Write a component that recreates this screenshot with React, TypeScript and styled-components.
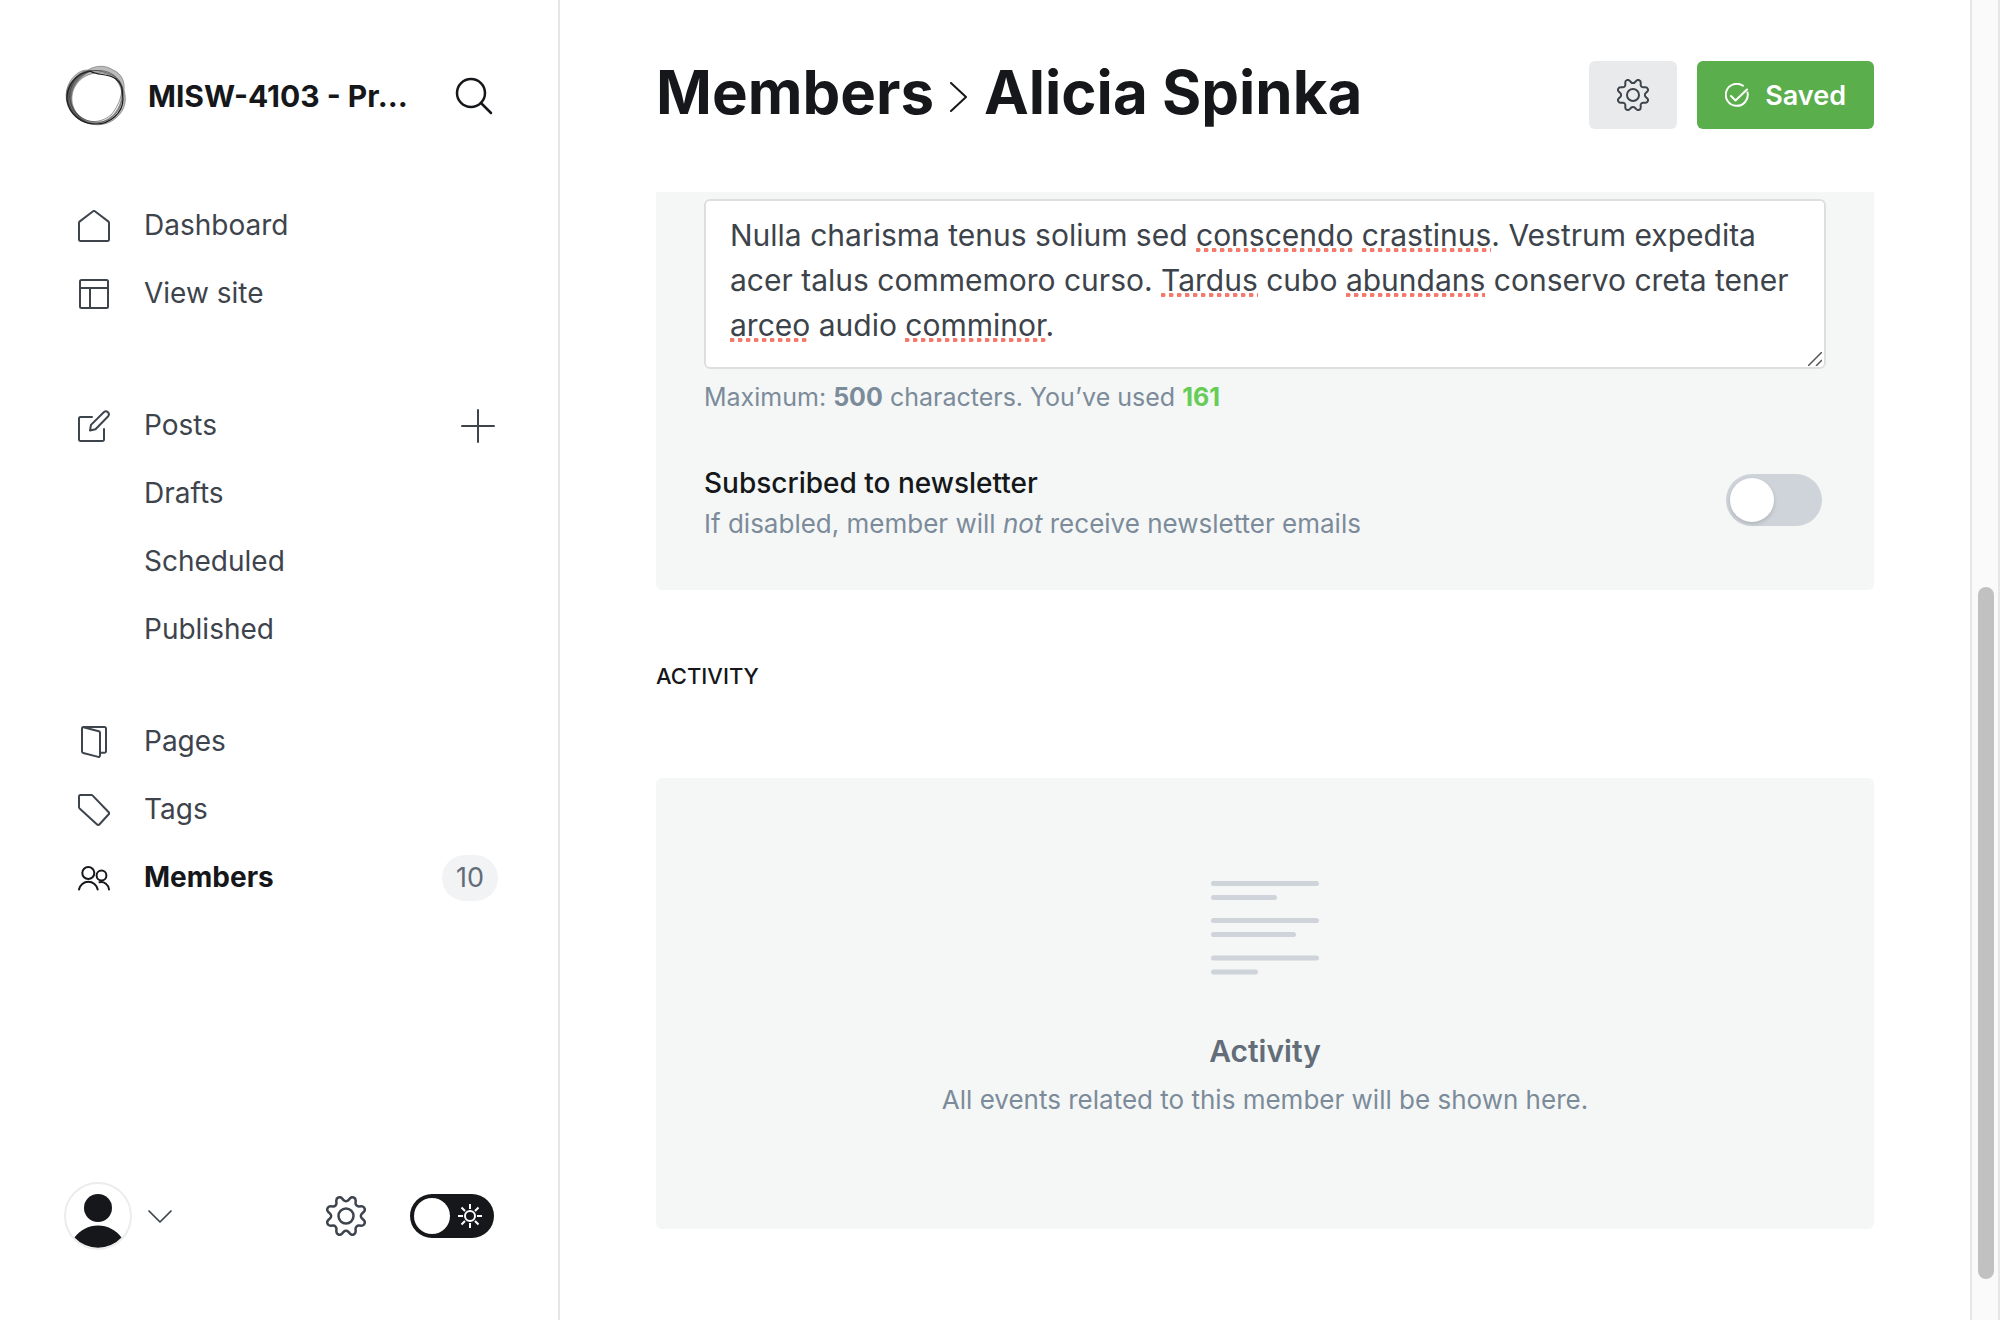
import React from 'react';
import styled, { createGlobalStyle, css } from 'styled-components';

const font = '"Inter", "Liberation Sans", sans-serif';
const color = {
  black: '#15171a',
  nav: '#3d444c',
  text: '#3d434a',
  mid: '#7c8b9a',
  slate: '#626d79',
  panel: '#f4f7f6',
  line: '#e6e6e6',
  green: '#5aae4c',
};

const GlobalStyle = createGlobalStyle`
  *, *::before, *::after { box-sizing: border-box; }
  body { margin: 0; background: #fff; color: ${color.black}; font-family: ${font}; }
  button, textarea, input { font: inherit; color: inherit; }
  h1, h2, h3, p { margin: 0; }
`;

const Page = styled.div`
  display: flex;
  min-height: 100vh;
`;

const Sidebar = styled.aside`
  flex: 0 0 28%;
  display: flex;
  flex-direction: column;
  min-width: 0;
  padding: 60px 64px 70px;
  border-right: 2px solid ${color.line};
`;

const Brand = styled.header`
  display: flex;
  align-items: center;
  height: 72px;
  gap: 20px;
  padding-right: 1px;
`;

const Logo = styled.svg`
  flex: none;
  width: 64px;
  height: 64px;
`;

const BrandName = styled.div`
  flex: 1;
  min-width: 0;
  white-space: nowrap;
  font-size: 30px;
  font-weight: 700;
`;

const IconButton = styled.button`
  display: flex;
  flex: none;
  padding: 0;
  border: 0;
  background: none;
  color: ${color.nav};
  cursor: pointer;
`;

const SearchButton = styled(IconButton)`
  color: ${color.black};
`;

const Nav = styled.nav`
  flex: 1;
  padding-top: 60px;
  margin-right: -4px;
`;

const NavList = styled.ul<{ $gap?: number }>`
  list-style: none;
  margin: 0 0 ${(p) => p.$gap ?? 0}px;
  padding: 0;
`;

const NavItem = styled.li`
  display: flex;
  align-items: center;
  height: 68px;
`;

const NavLink = styled.a<{ $active?: boolean; $nested?: boolean }>`
  flex: 1;
  display: flex;
  align-items: center;
  gap: 34px;
  padding-left: ${(p) => (p.$nested ? 80 : 14)}px;
  color: ${color.nav};
  font-size: 28px;
  line-height: 40px;
  text-decoration: none;
  ${(p) => p.$active && css`color: ${color.black}; font-weight: 700;`}
`;

const NavText = styled.span`
  padding-bottom: 2px;
`;

const Count = styled.span`
  padding: 0 14px;
  border-radius: 24px;
  background: #f1f3f5;
  color: ${color.slate};
  font-size: 27px;
  line-height: 46px;
`;

const Footer = styled.footer`
  display: flex;
  align-items: center;
`;

const AccountButton = styled(IconButton)`
  align-items: center;
  gap: 16px;
  margin-right: auto;
`;

const Avatar = styled.svg`
  width: 68px;
  height: 68px;
`;

const NightToggle = styled.label`
  position: relative;
  display: flex;
  align-items: center;
  justify-content: space-between;
  width: 84px;
  height: 44px;
  margin-left: 44px;
  padding: 0 11px 0 4px;
  border-radius: 22px;
  background: ${color.black};
  color: #fff;
`;

const HiddenCheckbox = styled.input`
  position: absolute;
  inset: 0;
  width: 100%;
  height: 100%;
  margin: 0;
  opacity: 0;
  cursor: pointer;
`;

const Knob = styled.span<{ $size: number }>`
  width: ${(p) => p.$size}px;
  height: ${(p) => p.$size}px;
  border-radius: 50%;
  background: #fff;
`;

const Main = styled.main`
  flex: 1;
  min-width: 0;
  padding: 0 96px;
`;

const TopBar = styled.header`
  display: flex;
  align-items: center;
  justify-content: space-between;
  height: 192px;
  padding-bottom: 2px;
`;

const Title = styled.h1`
  display: flex;
  align-items: center;
  gap: 16px;
  padding-bottom: 6px;
  font-size: 60px;
  font-weight: 700;
  line-height: 76px;
  white-space: nowrap;
`;

const Chevron = styled.svg`
  width: 18px;
  height: 30px;
  margin-top: 10px;
`;

const TitleLink = styled.a`
  color: inherit;
  text-decoration: none;
`;

const Actions = styled.div`
  display: flex;
  gap: 20px;
`;

const Button = styled.button<{ $primary?: boolean }>`
  display: flex;
  align-items: center;
  gap: 16px;
  height: 68px;
  padding: 0 28px;
  border: 0;
  border-radius: 6px;
  background: ${(p) => (p.$primary ? color.green : '#e9eaec')};
  color: ${(p) => (p.$primary ? '#fff' : color.nav)};
  font-size: 27px;
  font-weight: 600;
  cursor: pointer;
`;

const FormPanel = styled.section`
  padding: 7px 48px 46px;
  border-radius: 0 0 6px 6px;
  background: ${color.panel};
`;

const NoteField = styled.div`
  position: relative;
  height: 170px;
  border-radius: 6px;
  background: #fff;
`;

const noteText = css`
  display: block;
  width: 100%;
  height: 100%;
  padding: 12px 24px;
  font-family: ${font};
  font-size: 30px;
  line-height: 45px;
  white-space: pre-wrap;
`;

const NoteInput = styled.textarea`
  ${noteText}
  position: relative;
  border: 2px solid #dddfdf;
  border-radius: 6px;
  outline: 0;
  background: transparent;
  color: ${color.text};
  overflow: hidden;
  resize: none;
`;

const SpellingLayer = styled.div`
  ${noteText}
  position: absolute;
  inset: 0;
  border: 2px solid transparent;
  visibility: hidden;
`;

const Misspelt = styled.span`
  position: relative;

  &::after {
    content: '';
    position: absolute;
    right: 0;
    bottom: 1px;
    left: 0;
    height: 4px;
    background: radial-gradient(circle at 2px 2px, #f5796b 2px, transparent 3px) 0 0 / 8px 4px repeat-x;
    visibility: visible;
  }
`;

const Grip = styled.svg`
  position: absolute;
  right: 4px;
  bottom: 3px;
  width: 14px;
  height: 14px;
  pointer-events: none;
`;

const Hint = styled.p`
  color: ${color.mid};
  font-size: 26px;
  line-height: 40px;
`;

const NoteHint = styled(Hint)`
  margin-top: 8px;
  font-size: 25px;
`;

const Used = styled.strong`
  color: #66cc55;
`;

const SettingRow = styled.div`
  display: flex;
  align-items: flex-start;
  justify-content: space-between;
  margin-top: 45px;
  padding-right: 4px;
`;

const SettingLabel = styled.label`
  display: block;
  font-size: 28px;
  font-weight: 500;
  line-height: 42px;
`;

const Switch = styled.span`
  position: relative;
  display: flex;
  align-items: center;
  width: 96px;
  height: 52px;
  margin-top: 12px;
  padding: 4px;
  border-radius: 26px;
  background: #ced4d9;
`;

const SwitchKnob = styled(Knob)`
  box-shadow: 0 2px 4px rgba(0, 0, 0, 0.15);
`;

const SectionTitle = styled.h2`
  margin: 72px 0 88px;
  font-size: 22px;
  font-weight: 500;
  line-height: 28px;
`;

const EmptyPanel = styled.section`
  display: flex;
  flex-direction: column;
  align-items: center;
  padding: 100px 48px 109px;
  border-radius: 6px;
  background: ${color.panel};
  text-align: center;
`;

const EmptyTitle = styled.h3`
  margin: 51px 0 7px;
  color: ${color.slate};
  font-size: 30px;
  font-weight: 600;
  line-height: 44px;
`;

const ScrollTrack = styled.div`
  flex: none;
  display: grid;
  grid-template-rows: 587fr 692fr 41fr;
  width: 30px;
  padding: 0 4px 0 6px;
  border: solid ${color.line};
  border-width: 0 2px;
  background: #fafafa;
`;

const ScrollThumb = styled.div`
  grid-row: 2;
  border-radius: 8px;
  background: #c1c1c1;
`;

type IconProps = { size?: number; stroke?: number; children: React.ReactNode; box?: number };
const Icon = ({ size = 32, stroke = 2, box = 32, children }: IconProps) => (
  <svg
    width={size}
    height={size}
    viewBox={`0 0 ${box} ${box}`}
    fill="none"
    stroke="currentColor"
    strokeWidth={stroke}
    strokeLinecap="round"
    strokeLinejoin="round"
    aria-hidden="true"
  >
    {children}
  </svg>
);

const Gear = ({ size, stroke }: { size: number; stroke: number }) => (
  <Icon size={size} stroke={stroke} box={24}>
    <path d="M10.546,2.438a1.957,1.957,0,0,0,2.908,0L14.4,1.4a1.959,1.959,0,0,1,3.41,1.413l-.071,1.4A1.958,1.958,0,0,0,19.79,6.266l1.4-.071A1.959,1.959,0,0,1,22.6,9.6l-1.041.95a1.96,1.96,0,0,0,0,2.909l1.041.944a1.959,1.959,0,0,1-1.413,3.41l-1.4-.071a1.958,1.958,0,0,0-2.056,2.056l.071,1.4A1.959,1.959,0,0,1,14.4,22.6l-.941-1.041a1.959,1.959,0,0,0-2.908,0L9.606,22.6A1.959,1.959,0,0,1,6.2,21.192l.072-1.4a1.958,1.958,0,0,0-2.056-2.056l-1.4.071A1.958,1.958,0,0,1,1.4,14.4l1.041-.944a1.96,1.96,0,0,0,0-2.909L1.4,9.6A1.958,1.958,0,0,1,2.809,6.2l1.4.071A1.958,1.958,0,0,0,6.265,4.211l-.072-1.4A1.958,1.958,0,0,1,9.606,1.4Z" />
    <circle cx="12" cy="12" r="4.5" />
  </Icon>
);

const icons = {
  home: (
    <Icon>
      <path d="M1 13v16.5A1.5 1.5 0 0 0 2.500 31h27a1.500 1.500 0 0 0 1.500-1.500V13a2 2 0 0 0-.8-1.600L16.900 1.300a1.500 1.500 0 0 0-1.800 0L1.800 11.400A2 2 0 0 0 1 13Z" />
    </Icon>
  ),
  site: (
    <Icon>
      <rect x="2" y="2" width="28" height="28" rx="1.500" />
      <path d="M2 10h28M12 10v20" />
    </Icon>
  ),
  posts: (
    <Icon>
      <path d="M14 7H2.500A1.500 1.500 0 0 0 1 8.500v21A1.500 1.500 0 0 0 2.500 31h22a1.500 1.500 0 0 0 1.500-1.500V19" />
      <path d="M17.500 19.200 12 20.500l1-5.600L26 2a3 3 0 0 1 4.200 4.200Z" />
    </Icon>
  ),
  pages: (
    <Icon>
      <path d="M5.500 1.200 20.800 5.300A1.600 1.600 0 0 1 22 6.800v22.700a1.400 1.400 0 0 1-1.800 1.400L5.200 27A1.600 1.600 0 0 1 4 25.500V2.400A1.300 1.300 0 0 1 5.300 1h21.200A1.500 1.500 0 0 1 28 2.500v22.800a1.500 1.500 0 0 1-1.500 1.500H22" />
    </Icon>
  ),
  tags: (
    <Icon>
      <path d="M2.500 1h10.800a2 2 0 0 1 1.400.6l16 16.600a1.500 1.500 0 0 1 0 2.100L21.300 30.500a1.500 1.500 0 0 1-2.200 0L1.600 14.400A2 2 0 0 1 1 13V2.500A1.500 1.500 0 0 1 2.500 1Z" />
    </Icon>
  ),
  members: (
    <Icon stroke={2}>
      <circle cx="10.300" cy="11" r="6" />
      <circle cx="23.500" cy="13.500" r="4.900" />
      <path d="M1 27.500a9.500 9.500 0 0 1 18.700 0M21.500 20.200a8 8 0 0 1 9.500 7.300" />
    </Icon>
  ),
};

type Entry = { label: string; icon?: keyof typeof icons; active?: boolean; extra?: React.ReactNode };

const groups: { gap: number; entries: Entry[] }[] = [
  { gap: 64, entries: [{ label: 'Dashboard', icon: 'home' }, { label: 'View site', icon: 'site' }] },
  {
    gap: 44,
    entries: [
      {
        label: 'Posts',
        icon: 'posts',
        extra: (
          <IconButton aria-label="New post">
            <Icon size={40} box={40}><path d="M20 4v32M4 20h32" /></Icon>
          </IconButton>
        ),
      },
      { label: 'Drafts' },
      { label: 'Scheduled' },
      { label: 'Published' },
    ],
  },
  {
    gap: 0,
    entries: [
      { label: 'Pages', icon: 'pages' },
      { label: 'Tags', icon: 'tags' },
      { label: 'Members', icon: 'members', active: true, extra: <Count>10</Count> },
    ],
  },
];

const note =
  'Nulla charisma tenus solium sed conscendo crastinus. Vestrum expedita acer talus commemoro curso. Tardus cubo abundans conservo creta tener arceo audio comminor.';
const misspelt = /(conscendo|crastinus|Tardus|abundans|arceo|comminor)/;

export default function App() {
  return (
    <>
      <GlobalStyle />
      <Page>
        <Sidebar>
          <Brand>
            <Logo viewBox="0 0 64 64" fill="none" aria-hidden="true">
              <path
                d="M24 6C32 1 42 1 49 6C57 9 61 17 60 26C63 36 61 46 53 53C46 60 36 62 27 60C15 58 6 50 3 39C0 27 5 15 14 9C17 7 20 6 24 6Z"
                fill="#bcbcbc"
                stroke="#777"
                strokeWidth=".7"
              />
              <path
                d="M28 7C14 8 3 18 2 31C2 45 13 58 27 60C17 55 9 47 8 36C7 24 15 12 28 7Z"
                fill="#6f6f6f"
              />
              <path
                d="M33 9C44 8 54 14 57 25C60 38 52 52 40 57C27 61 13 54 9 42C5 29 12 16 24 11C27 10 30 9 33 9Z"
                fill="#fff"
                stroke="#777"
                strokeWidth=".7"
              />
              <g stroke="#1c1c1c">
                <path
                  d="M26 7C34 12 44 9 52 15C60 22 58 28 59 35C59 49 46 60 32 60C17 60 5 50 3 36C2 22 12 9 26 7Z"
                  strokeWidth="1.200"
                />
                <path
                  d="M19 8C29 4 42 8 50 12C58 18 61 25 58 36C55 50 45 58 33 59C19 60 6 49 4 36C3 25 9 13 19 8Z"
                  strokeWidth=".7"
                  opacity=".7"
                />
                <path
                  d="M24 8C36 5 48 6 56 18C61 30 53 44 47 51C37 59 25 60 15 52C6 44 4 33 7 24C10 15 16 10 24 8Z"
                  strokeWidth=".7"
                  opacity=".7"
                />
              </g>
            </Logo>
            <BrandName>MISW-4103 - Pr…</BrandName>
            <SearchButton aria-label="Search">
              <Icon size={38} box={38} stroke={2.5}>
                <circle cx="16" cy="16" r="14" />
                <path d="m26 26 10 10" />
              </Icon>
            </SearchButton>
          </Brand>
          <Nav aria-label="Main">
            {groups.map((group) => (
              <NavList key={group.entries[0].label} $gap={group.gap}>
                {group.entries.map(({ label, icon, active, extra }) => (
                  <NavItem key={label}>
                    <NavLink href="#" $active={active} $nested={!icon} aria-current={active ? 'page' : undefined}>
                      {icon && icons[icon]}
                      <NavText>{label}</NavText>
                    </NavLink>
                    {extra}
                  </NavItem>
                ))}
              </NavList>
            ))}
          </Nav>
          <Footer>
            <AccountButton aria-label="Account menu">
              <Avatar viewBox="0 0 68 68" aria-hidden="true">
                <circle cx="34" cy="34" r="33" fill="#fff" stroke="#ececec" strokeWidth="2" />
                <circle cx="34" cy="26" r="14" fill={color.black} />
                <path d="M10.500 55.500a29 29 0 0 1 47 0a32 32 0 0 1-47 0Z" fill={color.black} />
              </Avatar>
              <Icon size={24} box={24} stroke={1.7}><path d="m1 7 11 11L23 7" /></Icon>
            </AccountButton>
            <IconButton aria-label="Settings"><Gear size={40} stroke={1.5} /></IconButton>
            <NightToggle>
              <Knob $size={36} />
              <Icon size={26} box={26}>
                <circle cx="13" cy="13" r="5" />
                <path strokeLinecap="butt" d="M13 1v5M13 20v5M1 13h5M20 13h5M4.500 4.500l3.500 3.500M18 18l3.500 3.500M4.500 21.500 8 18M18 8l3.500-3.500" />
              </Icon>
              <HiddenCheckbox type="checkbox" aria-label="Night mode" />
            </NightToggle>
          </Footer>
        </Sidebar>

        <Main>
          <TopBar>
            <Title>
              <TitleLink href="#">Members</TitleLink>
              <Chevron viewBox="0 0 18 30" fill="none" stroke={color.black} strokeWidth="2" strokeLinecap="round" strokeLinejoin="round" aria-hidden="true">
                <path d="m1 1 15 14L1 29" />
              </Chevron>
              Alicia Spinka
            </Title>
            <Actions>
              <Button aria-label="Member settings"><Gear size={32} stroke={1.5} /></Button>
              <Button $primary>
                <Icon size={24} box={24}>
                  <path d="m6 13 4.500 4.500L22 6.500" />
                  <path d="M22.500 9.500A11 11 0 1 1 18 2.800" />
                </Icon>
                Saved
              </Button>
            </Actions>
          </TopBar>

          <FormPanel>
            <NoteField>
              <SpellingLayer aria-hidden="true">
                {note.split(misspelt).map((part, i) => (i % 2 ? <Misspelt key={i}>{part}</Misspelt> : part))}
              </SpellingLayer>
              <NoteInput aria-label="Note" spellCheck={false} defaultValue={note} />
              <Grip viewBox="0 0 14 14" stroke="#555" strokeWidth="1.500" aria-hidden="true">
                <path d="M0 14 14 0M8 14l6-6" />
              </Grip>
            </NoteField>
            <NoteHint>
              Maximum: <strong>500</strong> characters. You’ve used <Used>161</Used>
            </NoteHint>
            <SettingRow>
              <div>
                <SettingLabel htmlFor="subscribed">Subscribed to newsletter</SettingLabel>
                <Hint>If disabled, member will <em>not</em> receive newsletter emails</Hint>
              </div>
              <Switch>
                <SwitchKnob $size={44} />
                <HiddenCheckbox id="subscribed" type="checkbox" />
              </Switch>
            </SettingRow>
          </FormPanel>

          <SectionTitle>ACTIVITY</SectionTitle>

          <EmptyPanel>
            <svg width="108" height="100" viewBox="0 0 108 100" stroke="#ced4d9" strokeWidth="5" strokeLinecap="round" aria-hidden="true">
              <path d="M2.500 5.500h103M2.500 19.500h61M2.500 42.500h103M2.500 56.500h80M2.500 80h103M2.500 94h42" />
            </svg>
            <EmptyTitle>Activity</EmptyTitle>
            <Hint>All events related to this member will be shown here.</Hint>
          </EmptyPanel>
        </Main>

        <ScrollTrack aria-hidden="true">
          <ScrollThumb />
        </ScrollTrack>
      </Page>
    </>
  );
}
